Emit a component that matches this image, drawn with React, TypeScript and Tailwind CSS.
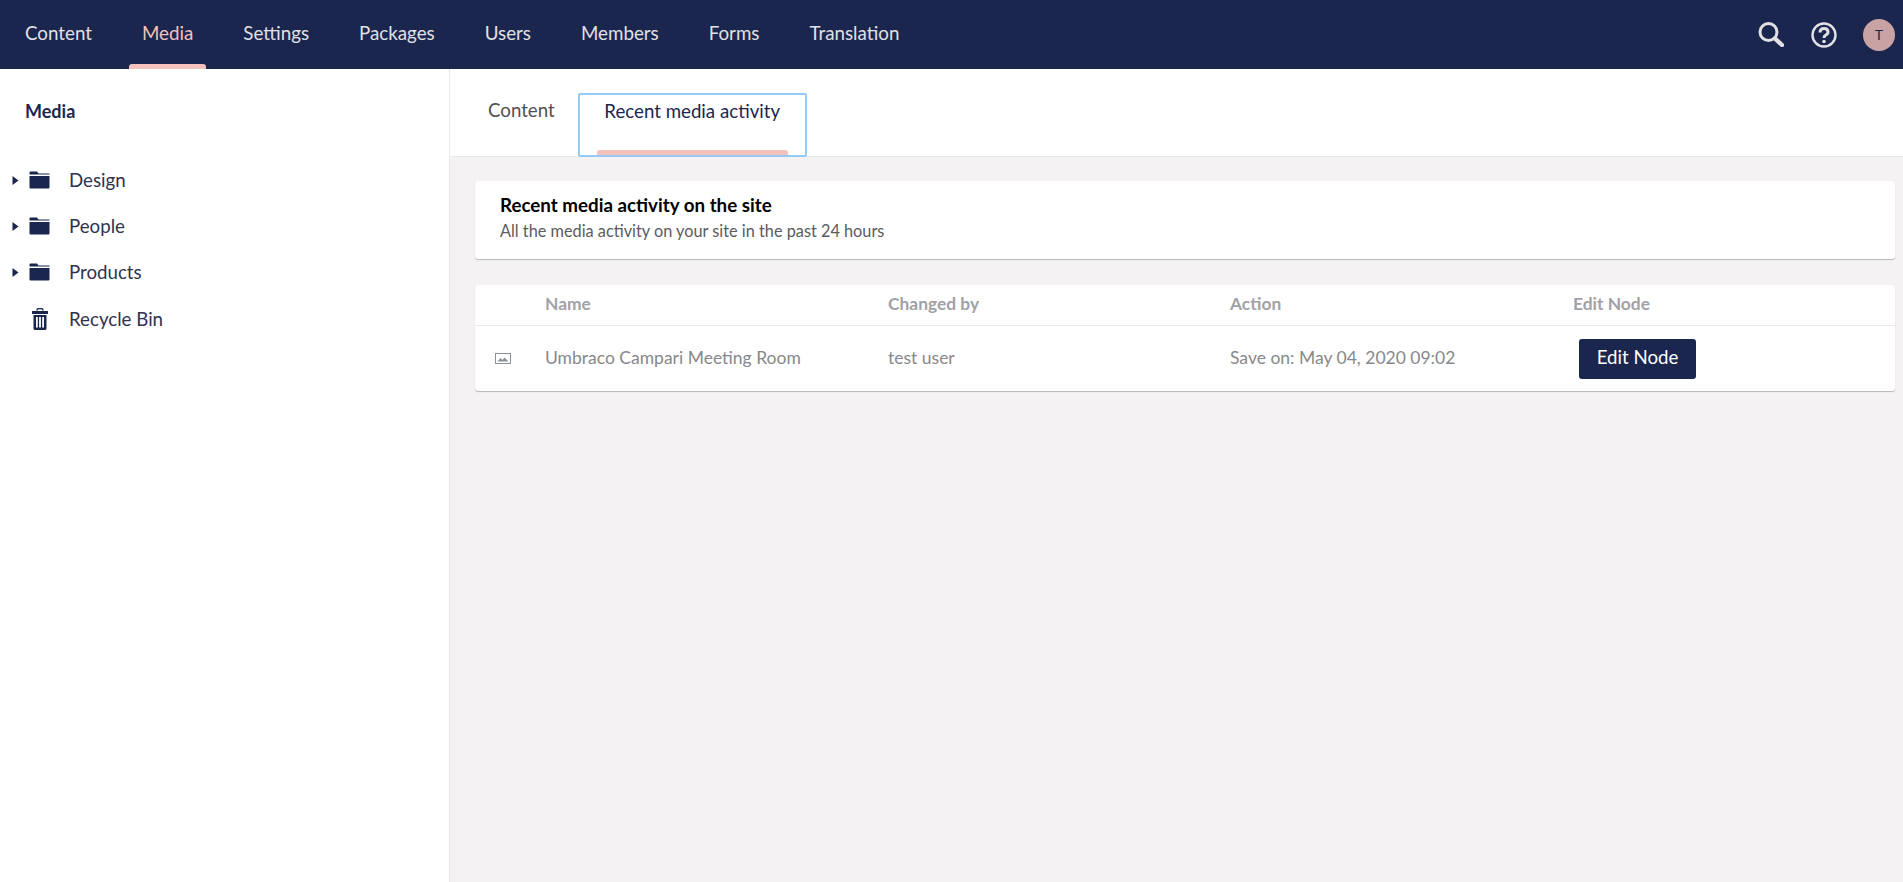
const navItems = ["Content", "Media", "Settings", "Packages", "Users", "Members", "Forms", "Translation"];

function Caret() {
  return (
    <svg width="7" height="9" viewBox="0 0 7 9" className="ml-3 shrink-0">
      <path d="M0.5 0 L6.5 4.5 L0.5 9 Z" fill="#1b264f" />
    </svg>
  );
}

function FolderIcon() {
  return (
    <svg width="21" height="18" viewBox="0 0 21 18" className="ml-[10px] shrink-0">
      <path d="M1.5 0.5 H8 L9.5 2.5 H20.5 V3.6 H0.5 V1.5 Q0.5 0.5 1.5 0.5 Z" fill="#1b264f" />
      <path d="M0.5 5 H20.5 V16.5 Q20.5 17.5 19.5 17.5 H1.5 Q0.5 17.5 0.5 16.5 Z" fill="#1b264f" />
    </svg>
  );
}

function TrashIcon() {
  return (
    <svg width="16" height="22" viewBox="0 0 16 22" className="ml-8 shrink-0">
      <path d="M5 2.5 Q5 0.5 7 0.5 H9 Q11 0.5 11 2.5" fill="none" stroke="#1b264f" strokeWidth="1.4" />
      <path d="M0 3 H16 V6 H0 Z" fill="#1b264f" />
      <path d="M1.5 7 H14.5 V20.5 Q14.5 22 13 22 H3 Q1.5 22 1.5 20.5 Z M4 9 V19.5 H5.8 V9 Z M7.1 9 V19.5 H8.9 V9 Z M10.2 9 V19.5 H12 V9 Z" fill="#1b264f" fillRule="evenodd" />
    </svg>
  );
}

function TreeRow({ label, bin }: { label: string; bin?: boolean }) {
  return (
    <div className={`flex items-center ${bin ? "h-[48px]" : "h-[46px]"}`}>
      {bin ? <TrashIcon /> : <><Caret /><FolderIcon /></>}
      <span className={`${bin ? "ml-[21px]" : "ml-[19px]"} text-[18.7px] text-[#2f3350]`}>{label}</span>
    </div>
  );
}

export default function App() {
  return (
    <div className="flex h-[882px] flex-col overflow-hidden bg-white font-[Lato,sans-serif]">
      <header className="flex h-[69px] shrink-0 items-center bg-[#1b264f]">
        <nav className="flex h-full">
          {navItems.map((item) => (
            <div key={item} className="relative flex h-full items-center px-[25px] pb-[2px]">
              <span className={`text-[18.75px] ${item === "Media" ? "text-[#f5c1bc]" : "text-[#e0e0e5]"}`}>{item}</span>
              {item === "Media" && (
                <div className="absolute right-3 bottom-0 left-3 h-[5px] rounded-t-[3px] bg-[#f5c1bc]" />
              )}
            </div>
          ))}
        </nav>
        <div className="ml-auto flex items-center pr-2">
          <svg width="26" height="25" viewBox="0 0 26 25" fill="none" stroke="#e0e0e5">
            <circle cx="10.5" cy="10" r="8.5" strokeWidth="3" />
            <path d="M17 16.5 L24 23" strokeWidth="4.4" strokeLinecap="round" />
          </svg>
          <svg width="26" height="26" viewBox="0 0 26 26" fill="none" stroke="#e0e0e5" className="ml-[27px]">
            <circle cx="13" cy="13" r="11.5" strokeWidth="2.4" />
            <path d="M9 10.5 Q9 6.5 13 6.5 Q17 6.5 17 10 Q17 12 14.8 13 Q13 14 13 16" strokeWidth="3" />
            <circle cx="13" cy="19.5" r="1.8" fill="#e0e0e5" stroke="none" />
          </svg>
          <div className="ml-[26px] flex h-[32px] w-[32px] items-center justify-center rounded-full bg-[#c9a3a3] text-[14px] text-[#1b264f]">
            T
          </div>
        </div>
      </header>

      <div className="flex min-h-0 flex-1">
        <aside className="w-[450px] shrink-0 border-r border-[#e9e9eb] bg-white">
          <div className="pt-[31px] pl-[25px] text-[18px] leading-[22px] font-bold text-[#1b264f]">Media</div>
          <div className="mt-[35px]">
            <TreeRow label="Design" />
            <TreeRow label="People" />
            <TreeRow label="Products" />
            <TreeRow label="Recycle Bin" bin />
          </div>
        </aside>

        <main className="flex min-w-0 flex-1 flex-col bg-[#f4f2f3]">
          <div className="flex h-[88px] shrink-0 items-start border-b border-[#e9e9eb] bg-white pt-[24px] pl-[38px]">
            <div className="flex h-[39px] items-start pt-[5px] text-[18.7px] leading-[24px] text-[#515054]">Content</div>
            <div className="relative ml-[23px] -mb-[1px] flex h-[64px] w-[229px] justify-center rounded-[2px] border-2 border-[#97c9f5] text-[18.7px] leading-[24px] text-[#1b264f]">
              <span className="pt-[4px]">Recent media activity</span>
              <div className="absolute right-[17px] bottom-0 left-[17px] h-[5px] rounded-t-[3px] bg-[#f5c1bc]" />
            </div>
          </div>

          <div className="px-[25px] pt-[24px] pr-[8px]">
            <section className="h-[78px] rounded-[3px] bg-white pt-[12px] pl-[25px] shadow-[0_1px_1px_rgba(0,0,0,0.25)]">
              <h2 className="text-[18.75px] leading-[24px] font-bold text-black">Recent media activity on the site</h2>
              <p className="mt-[4px] text-[16.3px] leading-[20px] text-[#5b5b60]">All the media activity on your site in the past 24 hours</p>
            </section>

            <section className="mt-[26px] rounded-[3px] bg-white shadow-[0_1px_1px_rgba(0,0,0,0.25)]">
              <div className="grid h-[41px] grid-cols-[70px_343px_342px_343px_1fr] items-center border-b border-[#e9e9eb] pb-[2px] text-[17.4px] font-bold text-[#a2a1a6]">
                <div />
                <div>Name</div>
                <div>Changed by</div>
                <div>Action</div>
                <div>Edit Node</div>
              </div>
              <div className="grid h-[65px] grid-cols-[70px_343px_342px_343px_1fr] items-center text-[17.5px] text-[#88888c]">
                <div className="pl-[20px]">
                  <svg width="16" height="11" viewBox="0 0 16 11" className="block">
                    <rect x="0.5" y="0.5" width="15" height="10" fill="none" stroke="#8a9196" />
                    <path d="M2.5 8.5 L5.5 5 L7.5 7 L9.5 4.5 L13.5 8.5 Z" fill="#8a9196" />
                  </svg>
                </div>
                <div>Umbraco Campari Meeting Room</div>
                <div>test user</div>
                <div>Save on: May 04, 2020 09:02</div>
                <div>
                  <button className="ml-[6px] h-[40px] w-[117px] rounded-[3px] bg-[#1b264f] pb-[2px] text-[18.7px] text-white">Edit Node</button>
                </div>
              </div>
            </section>
          </div>
        </main>
      </div>
    </div>
  );
}
